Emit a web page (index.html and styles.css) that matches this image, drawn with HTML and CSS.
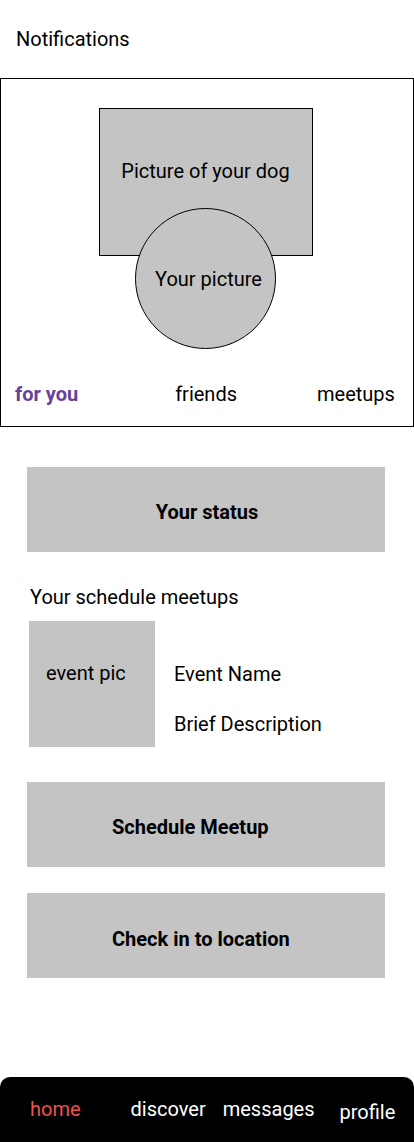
FILE: index.html
```html
<!DOCTYPE html>
<html>
<head>
<meta charset="utf-8">
<link rel="stylesheet" href="styles.css">
</head>
<body>
<div class="page">
  <div class="top">Notifications</div>
  <section class="hero">
    <div class="dog">Picture of your dog</div>
    <div class="me">Your picture</div>
    <nav class="tabs">
      <span class="tab active">for you</span>
      <span class="tab friends">friends</span>
      <span class="tab meetups">meetups</span>
    </nav>
  </section>
  <div class="block status">Your status</div>
  <div class="section-title">Your schedule meetups</div>
  <div class="event">
    <div class="event-pic">event pic</div>
    <div class="event-info">
      <div class="event-name">Event Name</div>
      <div class="event-desc">Brief Description</div>
    </div>
  </div>
  <div class="block action first">Schedule Meetup</div>
  <div class="block action second">Check in to location</div>
  <footer class="bottom-nav">
    <span class="nav-item home">home</span>
    <span class="nav-item discover">discover</span>
    <span class="nav-item messages">messages</span>
    <span class="nav-item profile">profile</span>
  </footer>
</div>
</body>
</html>
```
FILE: styles.css
```css
* { box-sizing: border-box; }
html, body { margin: 0; padding: 0; }
body {
  font-family: Roboto, "Liberation Sans", sans-serif;
  font-size: 20px;
  line-height: 24px;
  color: #000;
  background: #fff;
}
.page {
  width: 414px;
  min-height: 1142px;
  display: flex;
  flex-direction: column;
}
.top {
  height: 78px;
  padding: 27px 0 0 16px;
}
.hero {
  width: 414px;
  height: 349px;
  border: 1px solid #000;
  display: flex;
  flex-direction: column;
  align-items: flex-start;
  padding-top: 29px;
}
.dog {
  margin-left: 98px;
  width: 214px;
  height: 148px;
  background: #c4c4c4;
  border: 1px solid #000;
  padding-top: 50px;
  padding-right: 1px;
  text-align: center;
}
.me {
  position: relative;
  margin-left: 134px;
  margin-top: -48px;
  width: 141px;
  height: 141px;
  border-radius: 50%;
  border: 1px solid #000;
  background: #c4c4c4;
  display: flex;
  align-items: center;
  justify-content: center;
  padding-left: 6px;
}
.tabs {
  display: flex;
  margin-top: 33px;
  padding-left: 14px;
}
.tab.active { color: #6a3f9a; font-weight: 700; }
.tab.friends { margin-left: 97px; }
.tab.meetups { margin-left: 80px; }
.block {
  margin-left: 27px;
  width: 358px;
  height: 85px;
  background: #c4c4c4;
  font-weight: 700;
  padding-top: 33px;
}
.status {
  margin-top: 40px;
  text-align: center;
  padding-left: 2px;
}
.section-title {
  margin-top: 33px;
  padding-left: 30px;
}
.event {
  margin-top: 12px;
  display: flex;
  padding-left: 29px;
}
.event-pic {
  width: 126px;
  height: 126px;
  background: #c4c4c4;
  padding: 40px 0 0 17px;
}
.event-info {
  margin-left: 19px;
  padding-top: 41px;
}
.event-desc { margin-top: 26px; }
.action { padding-left: 85px; }
.action.first { margin-top: 35px; }
.action.second { margin-top: 26px; padding-top: 34px; }
.bottom-nav {
  margin-top: auto;
  height: 65px;
  background: #000;
  border-radius: 10px 10px 0 0;
  display: flex;
  align-items: flex-start;
  padding: 20px 0 0 30px;
  color: #fff;
}
.nav-item.home { color: #f24e4e; }
.nav-item.discover { margin-left: 50px; }
.nav-item.messages { margin-left: 17px; }
.nav-item.profile { margin-left: 25px; margin-top: 3px; }
```
